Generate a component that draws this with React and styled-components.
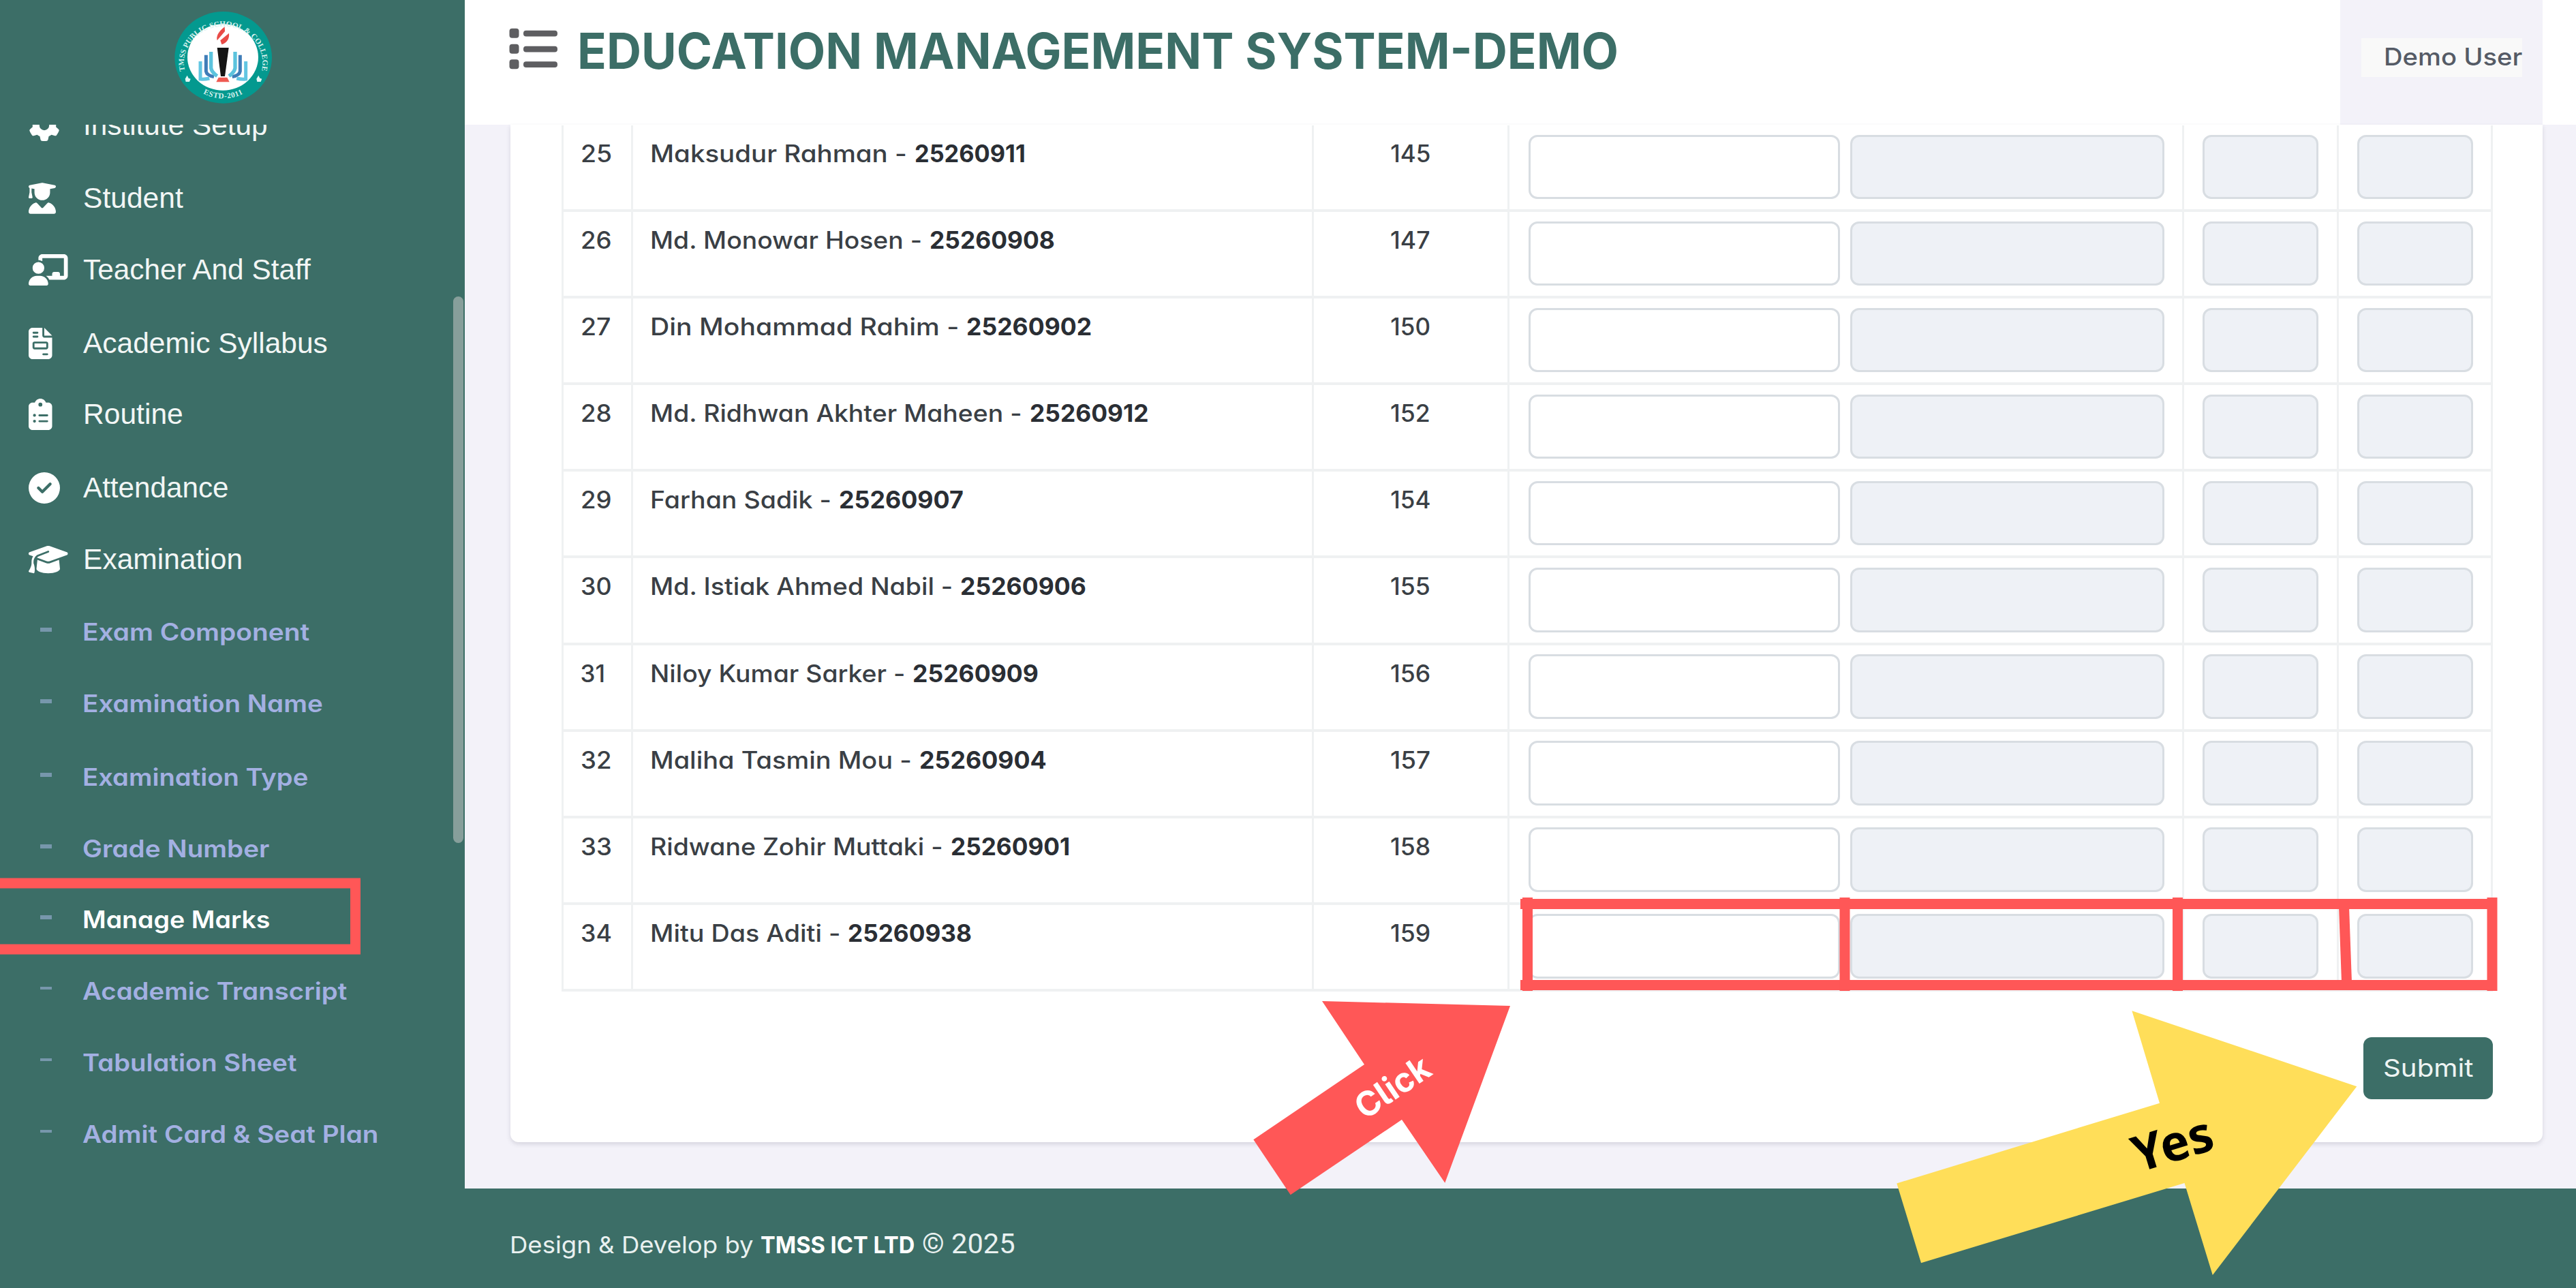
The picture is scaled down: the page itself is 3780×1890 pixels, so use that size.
import React, { useLayoutEffect, useRef, useState } from "react";
import styled, { createGlobalStyle } from "styled-components";
import {
  FaGear,
  FaUserGraduate,
  FaChalkboardUser,
  FaFileInvoice,
  FaClipboardList,
  FaCircleCheck,
  FaGraduationCap,
} from "react-icons/fa6";

const GREEN = "#3c6e67";
const LAVENDER = "#f3f2f9";
const LINE = "#eff1f2";
const RED = "#ff5757";
const YELLOW = "#ffde59";

const GlobalStyle = createGlobalStyle`
  * { box-sizing: border-box; }
  body {
    margin: 0;
    background: ${LAVENDER};
    font-family: Inter, "Open Sans", "Liberation Sans", sans-serif;
    font-feature-settings: "cv11";
  }
`;

const Page = styled.div`
  position: relative;
  display: flex;
  width: 3780px;
  height: 1890px;
  overflow: hidden;
`;

/* ---------- text stretched to a given width ---------- */

const Line = styled.span`
  display: inline-block;
  flex: none;
  white-space: pre;
`;

const Stretch = styled.span`
  display: inline-block;
  transform-origin: 0 50%;
`;

function Fit({ width, children, ...rest }) {
  const ref = useRef(null);
  const [scale, setScale] = useState(1);
  useLayoutEffect(() => {
    setScale(width / ref.current.offsetWidth);
  }, [width, children]);
  return (
    <Line style={{ width }} {...rest}>
      <Stretch ref={ref} style={{ transform: `scaleX(${scale})` }}>
        {children}
      </Stretch>
    </Line>
  );
}

/* ---------- sidebar ---------- */

const Sidebar = styled.aside`
  position: relative;
  display: flex;
  flex-direction: column;
  flex: none;
  width: 682px;
  height: 100%;
  background: ${GREEN};
`;

const Brand = styled.div`
  flex: none;
  height: 183px;
  padding-left: 240px;
  svg { display: block; }
`;

const Menu = styled.nav`
  flex: 1;
  min-height: 0;
  overflow: hidden;
`;

const MenuList = styled.ul`
  list-style: none;
  margin: -22.6px 0 0;
  padding: 0;
`;

const MenuItem = styled.li`
  display: flex;
  align-items: flex-start;
  height: ${(p) => p.$h}px;
  padding-left: ${(p) => (p.$sub ? 58 : 42)}px;
  color: ${(p) => (p.$active ? "#ffffff" : p.$sub ? "#a3b0e2" : "#f2f6f5")};
  font-family: ${(p) => (p.$sub ? "inherit" : '"Liberation Sans", Arial, sans-serif')};
  font-size: ${(p) => (p.$sub ? 35 : 42)}px;
  font-weight: ${(p) => (p.$sub ? 600 : 400)};
  line-height: ${(p) => (p.$sub ? 52 : 48)}px;
`;

const IconSlot = styled.span`
  flex: none;
  width: 79.5px;
  height: 48px;
  padding-top: 1px;
  color: #fff;
  svg {
    display: block;
    width: ${(p) => p.$w}px;
    height: 46px;
  }
`;

const Dash = styled.span`
  flex: none;
  width: 17px;
  height: ${(p) => (p.$thin ? 4 : 6)}px;
  margin: 20px 45px 0 1px;
  background: #7797ac;
`;

const ScrollThumb = styled.div`
  position: absolute;
  top: 435px;
  right: 2px;
  width: 15px;
  height: 802px;
  border-radius: 8px;
  background: #879f9b;
`;

const menu = [
  { label: "Institute Setup", icon: FaGear, iconW: 46, w: 271, h: 107 },
  { label: "Student", icon: FaUserGraduate, iconW: 40, w: 147, h: 105 },
  { label: "Teacher And Staff", icon: FaChalkboardUser, iconW: 57.5, w: 334, h: 107.5 },
  { label: "Academic Syllabus", icon: FaFileInvoice, iconW: 34.5, w: 359, h: 104.5 },
  { label: "Routine", icon: FaClipboardList, iconW: 34.5, w: 147, h: 107.5 },
  { label: "Attendance", icon: FaCircleCheck, iconW: 46, w: 214, h: 105.5 },
  { label: "Examination", icon: FaGraduationCap, iconW: 57.5, w: 234, h: 104 },
];

const subMenu = [
  { label: "Exam Component", w: 333, h: 105 },
  { label: "Examination Name", w: 353, h: 107.5 },
  { label: "Examination Type", w: 331, h: 105 },
  { label: "Grade Number", w: 275, h: 104.5 },
  { label: "Manage Marks", w: 276, h: 105, active: true },
  { label: "Academic Transcript", w: 388, h: 105, thin: true },
  { label: "Tabulation Sheet", w: 315, h: 105, thin: true },
  { label: "Admit Card & Seat Plan", w: 435, h: 105, thin: true },
];

function SchoolLogo() {
  const book = (
    <g fill="none" strokeLinecap="butt">
      <path d="M162 270V348Q182 350 202 345" stroke="#62c6e2" strokeWidth="15" />
      <path d="M187 242V314Q190 332 222 338" stroke="#3f7db8" strokeWidth="15" />
      <path d="M209 228V300Q212 318 236 335" stroke="#5cc3dd" strokeWidth="16" />
    </g>
  );
  return (
    <svg width="180" height="180" viewBox="0 0 540 540">
      <defs>
        <path id="ringTop" d="M96 320A173 162 0 1 1 430 320" />
        <path id="ringBottom" d="M118 366A184 176 0 0 0 408 366" />
      </defs>
      <ellipse cx="263" cy="253" rx="214" ry="202" fill="#04998f" />
      <ellipse cx="261" cy="252" rx="156" ry="146" fill="#fff" />
      <g fill="#d7f1ee" fontFamily="Liberation Serif, serif" fontWeight="700" textAnchor="middle">
        <text fontSize="34">
          <textPath href="#ringTop" startOffset="50%">
            TMSS PUBLIC SCHOOL &amp; COLLEGE
          </textPath>
        </text>
        <text fontSize="34" letterSpacing="2">
          <textPath href="#ringBottom" startOffset="50%">
            ESTD-2011
          </textPath>
        </text>
      </g>
      <path d="M104 332l6 12 9 3-5 13h-16l-3-13zM418 332l6 12 9 3-5 13h-16l-3-13z" fill="#e6f7f5" />
      {book}
      <g transform="translate(524 0) scale(-1 1)">{book}</g>
      <path d="M236 210H287L270 336H252Z" fill="#151515" />
      <path d="M242 341H280L290 361H232Z" fill="#ee5a52" />
      <path d="M269 118L270 138L236 178Q228 150 269 118Z" fill="#e94b47" />
      <path d="M288 146Q292 182 256 196L250 178Z" fill="#e94b47" />
    </svg>
  );
}

/* ---------- top bar ---------- */

const Main = styled.main`
  display: flex;
  flex-direction: column;
  flex: 1;
  min-width: 0;
`;

const TopBar = styled.header`
  display: flex;
  align-items: flex-start;
  flex: none;
  height: 183px;
  padding: 0 49px 0 65px;
  background: #fff;
`;

const MenuToggle = styled.svg`
  flex: none;
  margin: 41px 28px 0 0;
`;

const Title = styled.h1`
  flex: 1;
  margin: 0;
  padding-top: 26px;
  color: ${GREEN};
  font-size: 73px;
  font-weight: 650;
  line-height: 97px;
`;

const UserPanel = styled.div`
  flex: none;
  width: 297px;
  height: 183px;
  padding: 56px 0 0 31px;
  background: ${LAVENDER};
`;

const UserName = styled.div`
  width: 236px;
  height: 57px;
  padding-left: 33px;
  background: #f9f9f9;
  color: #555b66;
  font-size: 35px;
  font-weight: 500;
  line-height: 54px;
`;

/* ---------- marks table ---------- */

const Content = styled.section`
  flex: 1;
  min-height: 0;
  padding: 0 49px 0 67px;
  background: ${LAVENDER};
`;

const Card = styled.div`
  display: flex;
  flex-direction: column;
  height: 1492.5px;
  padding: 1px 73px 0 74.5px;
  background: #fff;
  border-radius: 0 0 12px 12px;
  box-shadow: 0 3px 6px rgba(60, 60, 90, 0.16);
`;

const Table = styled.div`
  width: 2834.5px;
  border-right: 3px solid ${LINE};
`;

const Row = styled.div`
  display: grid;
  grid-template-columns: 102.5px 999px 286.5px 990.5px 227px 226px;
  height: 127.1px;
  border-bottom: 4px solid ${LINE};
`;

const Cell = styled.div`
  display: flex;
  align-items: flex-start;
  padding: 16px 0 0 25px;
  border-left: 3px solid ${LINE};
  color: #3a3f45;
  font-size: 35px;
  font-weight: 450;
  line-height: 50px;
`;

const NameCell = styled(Cell)`
  gap: 11px;
`;

const RollCell = styled(Cell)`
  justify-content: center;
  padding-left: 0;
`;

const MarkCell = styled(Cell)`
  gap: 15px;
  padding: 13.6px 0 0 ${(p) => (p.$wide ? 28.5 : 27)}px;
`;

const StudentId = styled(Fit)`
  color: #2a2e34;
  font-weight: 700;
`;

const Field = styled.input`
  display: block;
  flex: none;
  width: ${(p) => p.$w}px;
  height: 94.5px;
  margin: 0;
  border: 3px solid #d8dde2;
  border-radius: 13px;
  background: ${(p) => (p.readOnly ? "#eef1f6" : "#fff")};
`;

const students = [
  { no: "25", noW: 46, name: "Maksudur Rahman -", id: "25260911", roll: "145", w: 377, idW: 163 },
  { no: "26", noW: 46, name: "Md. Monowar Hosen -", id: "25260908", roll: "147", w: 399, idW: 184 },
  { no: "27", noW: 45, name: "Din Mohammad Rahim -", id: "25260902", roll: "150", w: 453, idW: 184 },
  { no: "28", noW: 46, name: "Md. Ridhwan Akhter Maheen -", id: "25260912", roll: "152", w: 546, idW: 175 },
  { no: "29", noW: 46, name: "Farhan Sadik -", id: "25260907", roll: "154", w: 266, idW: 183 },
  { no: "30", noW: 46, name: "Md. Istiak Ahmed Nabil -", id: "25260906", roll: "155", w: 444, idW: 185 },
  { no: "31", noW: 36, name: "Niloy Kumar Sarker -", id: "25260909", roll: "156", w: 374, idW: 185 },
  { no: "32", noW: 46, name: "Maliha Tasmin Mou -", id: "25260904", roll: "157", w: 384, idW: 187 },
  { no: "33", noW: 46, name: "Ridwane Zohir Muttaki -", id: "25260901", roll: "158", w: 430, idW: 175 },
  { no: "34", noW: 46, name: "Mitu Das Aditi -", id: "25260938", roll: "159", w: 279, idW: 182 },
];

const Actions = styled.div`
  display: flex;
  justify-content: flex-end;
  width: 2834.5px;
  padding-top: 67px;
`;

const Submit = styled.button`
  width: 190px;
  height: 91.5px;
  padding: 0 0 0 29px;
  border: 0;
  border-radius: 12px;
  background: ${GREEN};
  color: #eef4f3;
  font: 400 36px/89px Inter, sans-serif;
  font-feature-settings: "cv11";
  text-align: left;
`;

/* ---------- footer ---------- */

const Footer = styled.footer`
  display: flex;
  align-items: baseline;
  flex: none;
  height: 146.5px;
  padding: 55.5px 0 0 66px;
  background: ${GREEN};
  color: #e9f1f0;
  font-size: 34.5px;
  line-height: 52px;
`;

const Company = styled(Fit)`
  margin-left: 10px;
  color: #fff;
  font-weight: 700;
`;

const Year = styled(Fit)`
  margin-left: 11px;
  font-family: Roboto, sans-serif;
  font-size: 41px;
`;

/* ---------- annotations lying over the page ---------- */

const Marks = styled.svg`
  position: absolute;
  inset: 0;
  pointer-events: none;
`;

const ClickText = styled.text`
  fill: #fff;
  font: 700 50px Inter, sans-serif;
  font-feature-settings: "cv05";
`;

const YesText = styled.text`
  fill: #000;
  font: 700 73px "Noto Sans", sans-serif;
`;

function Annotations() {
  return (
    <Marks width="3780" height="1890" viewBox="0 0 3780 1890">
      <path d="M0 1296H521.5V1393H0" fill="none" stroke={RED} strokeWidth="15" />
      <g fill={RED}>
        <rect x="2231" y="1319" width="1433" height="15" />
        <rect x="2231" y="1438" width="1433" height="15" />
        <rect x="2234" y="1317" width="15" height="137" />
        <rect x="2699.5" y="1317" width="15" height="137" />
        <rect x="3188" y="1317" width="15" height="137" />
        <rect x="3649.5" y="1317" width="15" height="137" />
        <path d="M3432 1330H3447L3451 1441H3436Z" />
        <path d="M1940 1469L2216 1476L2120.3 1735.7L2057 1643L1893.7 1753.3L1839.3 1672.3L2002 1562Z" />
      </g>
      <path
        d="M3128.4 1483.2L3458.3 1594.2L3246.8 1871L3205.5 1736L2819 1853.2L2783.3 1736.4L3169 1618.7Z"
        fill={YELLOW}
      />
      <ClickText
        transform="translate(2053.2 1610) rotate(-34)"
        textAnchor="middle"
        textLength="122"
        lengthAdjust="spacingAndGlyphs"
      >
        Click
      </ClickText>
      <YesText
        transform="translate(3195.4 1703.1) rotate(-17)"
        textAnchor="middle"
        textLength="120"
        lengthAdjust="spacingAndGlyphs"
      >
        Yes
      </YesText>
    </Marks>
  );
}

export default function App() {
  return (
    <>
      <GlobalStyle />
      <Page>
        <Sidebar>
          <Brand>
            <SchoolLogo />
          </Brand>
          <Menu>
            <MenuList>
              {menu.map(({ label, icon: Icon, iconW, w, h }) => (
                <MenuItem key={label} $h={h}>
                  <IconSlot $w={iconW}>
                    <Icon />
                  </IconSlot>
                  <Fit width={w}>{label}</Fit>
                </MenuItem>
              ))}
              {subMenu.map(({ label, w, h, active, thin }) => (
                <MenuItem key={label} $h={h} $sub $active={active}>
                  <Dash $thin={thin} />
                  <Fit width={w}>{label}</Fit>
                </MenuItem>
              ))}
            </MenuList>
          </Menu>
          <ScrollThumb />
        </Sidebar>

        <Main>
          <TopBar>
            <MenuToggle width="72" height="62" viewBox="0 0 72 62" fill="#5e5e61">
              {[0, 23, 45.5].map((y) => (
                <g key={y}>
                  <rect x="0.5" y={y + 0.8} width="14" height="14" rx="4" />
                  <rect x="21" y={y + 3.8} width="50" height="8.6" rx="4" />
                </g>
              ))}
            </MenuToggle>
            <Title>
              <Fit width={1528}>EDUCATION MANAGEMENT SYSTEM-DEMO</Fit>
            </Title>
            <UserPanel>
              <UserName>
                <Fit width={203}>Demo User</Fit>
              </UserName>
            </UserPanel>
          </TopBar>

          <Content>
            <Card>
              <Table>
                {students.map((s) => (
                  <Row key={s.id}>
                    <Cell>
                      <Fit width={s.noW}>{s.no}</Fit>
                    </Cell>
                    <NameCell>
                      <Fit width={s.w}>{s.name}</Fit>
                      <StudentId width={s.idW}>{s.id}</StudentId>
                    </NameCell>
                    <RollCell>
                      <Fit width={59}>{s.roll}</Fit>
                    </RollCell>
                    <MarkCell $wide>
                      <Field $w={457} />
                      <Field $w={461} readOnly />
                    </MarkCell>
                    <MarkCell>
                      <Field $w={170} readOnly />
                    </MarkCell>
                    <MarkCell>
                      <Field $w={170} readOnly />
                    </MarkCell>
                  </Row>
                ))}
              </Table>
              <Actions>
                <Submit>
                  <Fit width={132}>Submit</Fit>
                </Submit>
              </Actions>
            </Card>
          </Content>

          <Footer>
            <Fit width={358}>Design &amp; Develop by</Fit>
            <Company width={226}>TMSS ICT LTD</Company>
            <Year width={137}>© 2025</Year>
          </Footer>
        </Main>

        <Annotations />
      </Page>
    </>
  );
}
